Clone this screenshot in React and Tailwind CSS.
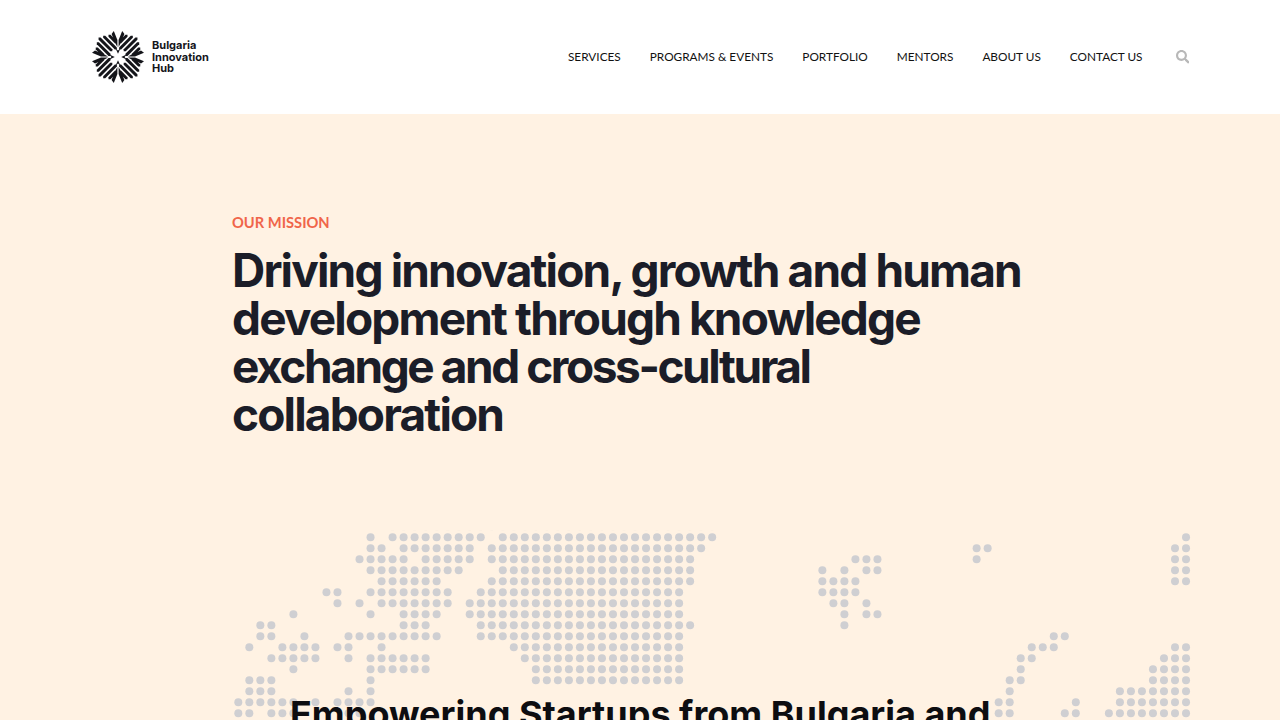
import React from "react";
import { FaSearch } from "react-icons/fa";

const r = (a, b) => Array.from({ length: b - a + 1 }, (_, i) => a + i);
const ROWS = [
  [12, ...r(14, 22), ...r(24, 43), 86],
  [12, 13, ...r(15, 21), ...r(23, 42), 67, 68, 85, 86],
  [...r(11, 15), ...r(17, 21), ...r(23, 41), 56, 57, 58, 67, 85, 86],
  [...r(12, 20), ...r(24, 41), 53, 55, 57, 58, 85, 86],
  [...r(13, 18), ...r(23, 41), ...r(53, 56), 85, 86],
  [8, 9, ...r(12, 19), ...r(22, 40), ...r(53, 56)],
  [9, 11, ...r(13, 19), ...r(21, 40), 54, 55, 57],
  [5, 12, ...r(15, 18), ...r(21, 40), 55, 57, 58],
  [2, 3, 15, 16, 17, ...r(22, 41), 55],
  [2, 3, 6, ...r(10, 18), ...r(22, 40), 74, 75],
  [1, ...r(4, 7), 9, 10, 13, ...r(25, 40), 72, 73, 74, 85, 86],
  [...r(3, 7), 10, ...r(12, 17), ...r(26, 40), 71, 72, 84, 85, 86],
  [5, ...r(12, 17), ...r(27, 40), 71, ...r(83, 86)],
  [1, 2, 3, 12, 27, 28, ...r(29, 40), 70, 71, ...r(83, 86)],
  [1, 2, 3, 10, 12, 70, ...r(80, 86)],
  [0, 1, 2, 3, 4, 5, 7, 9, 10, 11, 12, 69, 70, 76, ...r(80, 86)],
  [0, 1, 3, 4, 5, 10, 11, 69, 70, 75, 76, ...r(79, 86)],
];

function DotMap() {
  return (
    <svg width="968" height="190" viewBox="0 0 968 190" className="block" aria-hidden="true">
      {r(14, 43).map((c) => (
        <circle key={c} cx={6.3 + 11.02 * c} cy={-3.7} r="3.9" fill="#cfcfd2" fillOpacity="0.35" />
      ))}
      {ROWS.map((cols, y) =>
        cols.map((c) => (
          <circle key={`${y}-${c}`} cx={6.3 + 11.02 * c} cy={7.3 + 11 * y} r="4" fill="#cfcfd2" />
        ))
      )}
    </svg>
  );
}

const BARS = [
  [0, 9.5, 26],
  [-4.5, 7.5, 24],
  [4.5, 7.5, 24],
  [-9, 12, 21],
  [9, 12, 21],
];

function Logo() {
  const w = 1.45;
  return (
    <svg width="54" height="54" viewBox="-27 -27 54 54" aria-hidden="true">
      <g fill="#14151a">
        {[0, 90, 180, 270].map((a) => (
          <g key={a} transform={`rotate(${a})`}>
            <polygon points="-0.6,-10 -0.6,-17 -4.2,-26 -6.4,-23 -3,-14.5" />
            <polygon points="0.6,-10 0.6,-17 4.2,-26 6.4,-23 3,-14.5" />
            <g transform="rotate(45)">
              {BARS.map(([v, u1, u2]) => (
                <polygon
                  key={v}
                  points={`${v},${-u2 - w} ${v + w},${-u2} ${v + w},${-u1} ${v},${-u1 + w} ${v - w},${-u1} ${v - w},${-u2}`}
                />
              ))}
            </g>
            <polygon points="-2.4,-8.6 0,-3.2 2.4,-8.6 0,-6.6" />
          </g>
        ))}
      </g>
    </svg>
  );
}

const NAV = ["SERVICES", "PROGRAMS & EVENTS", "PORTFOLIO", "MENTORS", "ABOUT US", "CONTACT US"];

export default function App() {
  return (
    <div className="h-[720px] overflow-hidden flex flex-col bg-[#fff2e3] font-['Inter','Liberation_Sans',sans-serif]">
      <header className="h-[114px] shrink-0 bg-white flex items-center justify-between pl-[91px] pr-[91px]">
        <div className="flex items-center gap-[7px]">
          <Logo />
          <div className="pt-[1px] font-['Inter',sans-serif] font-bold text-[11px] leading-[11.5px] text-[#14151a]">
            Bulgaria
            <br />
            Innovation
            <br />
            Hub
          </div>
        </div>
        <nav className="flex items-center text-[11.8px] text-[#111] font-['Lato',sans-serif]">
          <div className="flex items-center gap-[29px]">
            {NAV.map((n) => (
              <a key={n} className="whitespace-nowrap">{n}</a>
            ))}
          </div>
          <FaSearch className="ml-[33px] text-[#b8b8b8] text-[13.5px]" />
        </nav>
      </header>
      <main className="flex-1 pl-[232px]">
        <div className="pt-[98px] text-[14.7px] leading-[20px] font-['Lato',sans-serif] font-bold text-[#f0654a]">OUR MISSION</div>
        <h1 className="mt-[14px] text-[46px] leading-[48px] font-bold tracking-[-0.04em] text-[#1b1d28]">
          Driving innovation, growth and human
          <br />
          development through knowledge
          <br />
          <span className="tracking-[-0.053em]">exchange and cross-cultural</span>
          <br />
          collaboration
        </h1>
        <div className="relative mt-[92px]">
          <DotMap />
          <div className="absolute left-[58px] top-[162px] whitespace-nowrap font-['Inter',sans-serif] text-[36px] leading-[44px] font-bold text-[#0d0d10]">
            Empowering Startups from Bulgaria and
          </div>
        </div>
      </main>
    </div>
  );
}
